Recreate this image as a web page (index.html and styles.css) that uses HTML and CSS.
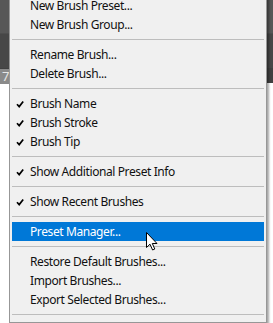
FILE: index.html
```html
<!DOCTYPE html>
<html>

<head>
    <title>Brush Presets Menu</title>
    <link rel="stylesheet" href="styles.css">
</head>

<body>
    <div class="backdrop">
        <div class="bar bar-top"></div>
        <div class="bar bar-mid"></div>
        <div class="bar bar-field"><span class="field">70</span></div>
        <div class="canvas"></div>
    </div>

    <ul class="menu">
        <li class="item"><span class="check"></span>New Brush Preset...</li>
        <li class="item"><span class="check"></span>New Brush Group...</li>
        <li class="separator"></li>
        <li class="item"><span class="check"></span>Rename Brush...</li>
        <li class="item"><span class="check"></span>Delete Brush...</li>
        <li class="separator"></li>
        <li class="item"><span class="check"><svg viewBox="0 0 8 8" width="8" height="8"><path d="M1 4.2 L3.2 6.6 L7.2 1.4" /></svg></span>Brush Name</li>
        <li class="item"><span class="check"><svg viewBox="0 0 8 8" width="8" height="8"><path d="M1 4.2 L3.2 6.6 L7.2 1.4" /></svg></span>Brush Stroke</li>
        <li class="item"><span class="check"><svg viewBox="0 0 8 8" width="8" height="8"><path d="M1 4.2 L3.2 6.6 L7.2 1.4" /></svg></span>Brush Tip</li>
        <li class="separator"></li>
        <li class="item"><span class="check"><svg viewBox="0 0 8 8" width="8" height="8"><path d="M1 4.2 L3.2 6.6 L7.2 1.4" /></svg></span>Show Additional Preset Info</li>
        <li class="separator"></li>
        <li class="item"><span class="check"><svg viewBox="0 0 8 8" width="8" height="8"><path d="M1 4.2 L3.2 6.6 L7.2 1.4" /></svg></span>Show Recent Brushes</li>
        <li class="separator"></li>
        <li class="item active"><span class="check"></span>Preset Manager...</li>
        <li class="separator"></li>
        <li class="item"><span class="check"></span>Restore Default Brushes...</li>
        <li class="item"><span class="check"></span>Import Brushes...</li>
        <li class="item"><span class="check"></span>Export Selected Brushes...</li>
        <li class="separator"></li>
    </ul>

    <!-- mouse pointer over the highlighted entry -->
    <svg class="cursor" viewBox="0 0 12 19" width="12" height="19">
        <path d="M0.5 0.5 L0.5 15.5 L4 12.2 L6.6 18 L8.8 17 L6.3 11.5 L11 11.5 Z" />
    </svg>
</body>

</html>
```

FILE: styles.css
```css
body {
    margin: 0;
    width: 273px;
    height: 323px;
    overflow: hidden;
    position: relative;
    background-color: #fff;
    font-family: "Noto Sans", "Open Sans", sans-serif;
    font-size: 12px;
}

.bar-top {
    height: 33px;
    background-color: #575757;
    border-bottom: 1px solid #4e4e4e;
}

.bar-mid {
    height: 34px;
    background-color: #474747;
}

.bar-field {
    height: 15px;
    background-color: #404040;
}

.field {
    display: inline-block;
    width: 40px;
    height: 15px;
    line-height: 15px;
    padding-left: 2px;
    background-color: #8a8a8a;
    color: #e6e6e6;
    font-size: 13px;
}

.canvas {
    height: 241px;
    background-color: #fff;
}

.menu {
    position: absolute;
    left: 9px;
    top: -7px;
    width: 252px;
    margin: 0;
    padding: 2px 2px;
    list-style: none;
    background-color: #f0f0f0;
    border: 1px solid #979797;
    box-shadow: 2px 2px 2px rgba(0, 0, 0, 0.35);
}

.item {
    display: flex;
    align-items: center;
    height: 19px;
    line-height: 19px;
    color: #111;
    letter-spacing: -0.4px;
    white-space: nowrap;
}

.item.active {
    background-color: #0078d7;
    color: #fff;
}

.check {
    width: 18px;
    flex: none;
    display: flex;
    padding-left: 4px;
    box-sizing: border-box;
}

.check svg path {
    fill: none;
    stroke: #000;
    stroke-width: 1.7;
}

.separator {
    height: 11px;
    display: flex;
    align-items: center;
}

.separator::before {
    content: "";
    flex: 1;
    height: 1px;
    background-color: #bdbdbd;
}

.cursor {
    position: absolute;
    left: 146px;
    top: 232px;
}

.cursor path {
    fill: #fff;
    stroke: #000;
    stroke-width: 1;
}
```
